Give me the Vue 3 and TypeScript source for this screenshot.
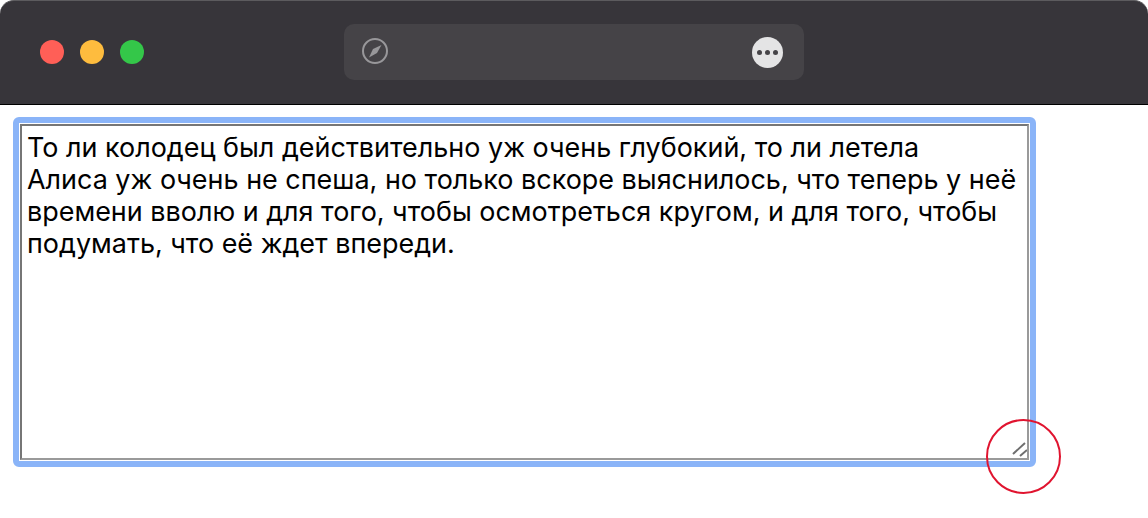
<script setup lang="ts">
const text = 'То ли колодец был действительно уж очень глубокий, то ли летела\nАлиса уж очень не спеша, но только вскоре выяснилось, что теперь у неё времени вволю и для того, чтобы осмотреться кругом, и для того, чтобы подумать, что её ждет впереди.'
</script>

<template>
  <div class="page">
    <header class="bar">
      <div class="lights">
        <span class="light red"></span>
        <span class="light yellow"></span>
        <span class="light green"></span>
      </div>
      <div class="address">
        <svg class="compass" width="28" height="28" viewBox="0 0 28 28">
          <circle cx="14" cy="14" r="12" fill="none" stroke="#98979a" stroke-width="2" />
          <path d="M20.5 8 L16 16 L8 20.5 L12 12 Z" fill="#98979a" />
        </svg>
        <span class="more">
          <i></i><i></i><i></i>
        </span>
      </div>
    </header>
    <main class="content">
      <div class="focus">
        <div class="field">{{ text }}
          <svg class="grip" width="18" height="18" viewBox="0 0 18 18">
            <path d="M4 14 L16 3 M11 16 L18 10" stroke="#6f6f6f" stroke-width="2" fill="none" />
          </svg>
        </div>
      </div>
      <span class="ring"></span>
    </main>
  </div>
</template>

<style>
html, body { margin: 0; background: #fff; }
</style>

<style scoped>
.page { width: 1148px; height: 518px; overflow: hidden; background: #fff; font-family: "Liberation Sans", Arial, sans-serif; }
.bar {
  height: 103px;
  background: #37353a;
  border-top: 1px solid #5c5b5e;
  border-bottom: 1px solid #000;
  border-radius: 14px 14px 0 0;
  display: flex;
  align-items: flex-start;
}
.lights { display: flex; gap: 16px; margin: 39px 0 0 40px; }
.light { width: 24px; height: 24px; border-radius: 50%; display: block; }
.red { background: #ff5f57; }
.yellow { background: #febc3e; }
.green { background: #34c749; }
.address {
  width: 460px; height: 56px;
  margin: 23px 0 0 200px;
  background: #454347;
  border-radius: 10px;
  display: flex; align-items: center; justify-content: space-between;
  padding: 0 21px 0 17px;
  box-sizing: border-box;
}
.compass { margin-bottom: 3px; }
.more {
  width: 31px; height: 31px; border-radius: 50%; background: #e4e4e5;
  display: flex; align-items: center; justify-content: center; gap: 3px;
}
.more i { width: 5px; height: 5px; border-radius: 50%; background: #454347; display: block; }
.content { position: relative; padding: 12px 0 0 13px; }
.focus {
  width: 1023px; height: 350px; box-sizing: border-box;
  background: #fff;
  border: 6px solid #8ab4f8;
  border-radius: 6px;
  padding: 1px;
}
.field {
  position: relative;
  width: 100%; height: 100%;
  box-sizing: border-box;
  border: 2px solid;
  border-color: #767676 #9a9a9a #9a9a9a #767676;
  padding: 5.5px 6px 6px 5px;
  font-family: Inter, "Liberation Sans", sans-serif;
  font-size: 26.95px; line-height: 32px;
  color: #000;
  white-space: pre-line;
}
.grip { position: absolute; right: 0; bottom: 0; }
.ring {
  position: absolute; left: 986px; top: 314px;
  width: 75px; height: 75px; box-sizing: border-box;
  border: 2.5px solid #e0142f; border-radius: 50%;
}
</style>
